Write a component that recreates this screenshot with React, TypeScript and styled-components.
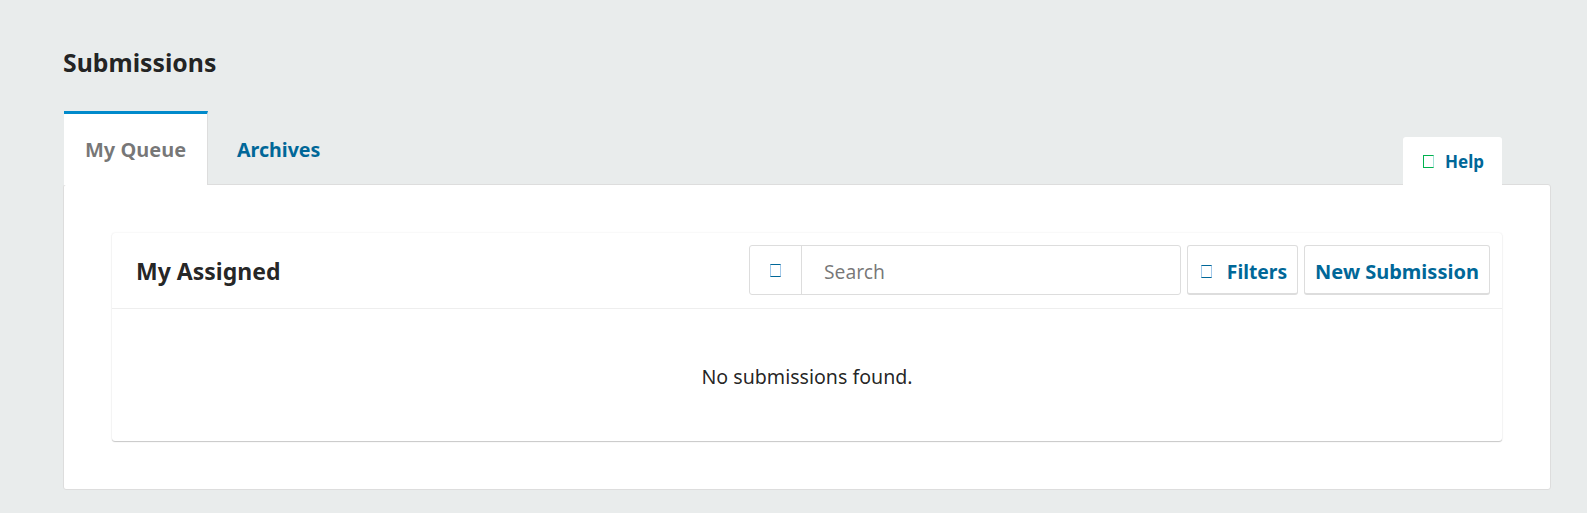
import React, { ReactElement } from "react";
import styled, { createGlobalStyle } from "styled-components";

const linkColor = "#006798";
const textColor = "rgba(0, 0, 0, 0.87)";
const lineColor = "#ddd";
const paleBlue = "#a3c9ea";

const GlobalStyle = createGlobalStyle`
    html, body {
        margin: 0;
        padding: 0;
        background: #e9ecec;
    }
    body {
        font-family: "Noto Sans", "Open Sans", sans-serif;
        color: ${textColor};
    }
`;

const Page = styled.div`
    height: 513px;
    box-sizing: border-box;
    padding: 46px 36px 0 63px;
    overflow: hidden;
`;

const Title = styled.h1`
    margin: 0;
    height: 32px;
    line-height: 32px;
    font-size: 24.8px;
    font-weight: 700;
`;

const TabRow = styled.div`
    display: flex;
    align-items: flex-end;
    height: 74px;
    margin-top: 32px;
    padding-left: 1px;
`;

const ActiveTab = styled.div`
    width: 144px;
    height: 74px;
    box-sizing: border-box;
    border-top: 3px solid #008acb;
    border-right: 1px solid ${lineColor};
    background: #fff;
    color: rgba(0, 0, 0, 0.54);
    font-size: 20px;
    font-weight: 700;
    line-height: 71px;
    text-align: center;
    margin-bottom: -1px;
    position: relative;
    z-index: 1;
`;

const Tab = styled.div`
    height: 74px;
    padding: 0 29px;
    color: ${linkColor};
    font-size: 19.6px;
    font-weight: 700;
    line-height: 80px;
`;

const HelpTab = styled.div`
    display: flex;
    align-items: center;
    gap: 11px;
    width: 99px;
    height: 48px;
    box-sizing: border-box;
    margin-left: auto;
    margin-right: 49px;
    margin-bottom: -1px;
    padding-left: 20px;
    border-radius: 3px 3px 0 0;
    background: #fff;
    color: ${linkColor};
    font-size: 17px;
    font-weight: 700;
    position: relative;
    z-index: 1;
`;

const MissingGlyph = styled.span<{ $color: string; $left: string; $right: string }>`
    display: block;
    flex: none;
    width: 11px;
    height: 13px;
    box-sizing: border-box;
    border: 1px solid ${props => props.$color};
    border-left-color: ${props => props.$left};
    border-right-color: ${props => props.$right};
`;

const Panel = styled.div`
    height: 306px;
    box-sizing: border-box;
    padding: 48px 48px 0 48px;
    border: 1px solid ${lineColor};
    border-radius: 3px;
    background: #fff;
`;

const Card = styled.div`
    height: 208px;
    border-radius: 3px;
    background: #fff;
    box-shadow: 0 1px 1px rgba(0, 0, 0, 0.2), 0 0 2px rgba(0, 0, 0, 0.1);
`;

const CardHeader = styled.div`
    display: flex;
    align-items: center;
    gap: 6px;
    height: 76px;
    box-sizing: border-box;
    padding: 0 12px 2px 24px;
    border-bottom: 1px solid #eee;
`;

const CardTitle = styled.h2`
    margin: 2px auto 0 0;
    font-size: 23px;
    font-weight: 700;
`;

const SearchBox = styled.div`
    display: flex;
    width: 432px;
    height: 50px;
    box-sizing: border-box;
    border: 1px solid ${lineColor};
    border-radius: 3px;
`;

const SearchIcon = styled.div`
    display: flex;
    align-items: center;
    justify-content: center;
    width: 51px;
    padding-top: 1px;
    border-right: 1px solid ${lineColor};
`;

const SearchPlaceholder = styled.div`
    padding-left: 22px;
    color: rgba(0, 0, 0, 0.54);
    font-size: 19.3px;
    line-height: 52px;
`;

const Button = styled.div<{ $width: number; $size: number; $inset?: number }>`
    display: flex;
    align-items: center;
    justify-content: center;
    gap: 15px;
    width: ${props => props.$width}px;
    height: 50px;
    box-sizing: border-box;
    padding: 5px 0 0 ${props => props.$inset || 0}px;
    border: 1px solid ${lineColor};
    border-bottom: 2px solid ${lineColor};
    border-radius: 3px;
    background: #fff;
    color: ${linkColor};
    font-size: ${props => props.$size}px;
    font-weight: 700;
`;

const EmptyMessage = styled.div`
    padding-top: 54px;
    font-size: 19.6px;
    line-height: 28px;
    text-align: center;
`;

const App = (): ReactElement => (
    <>
        <GlobalStyle />
        <Page>
            <Title>Submissions</Title>
            <TabRow>
                <ActiveTab>My Queue</ActiveTab>
                <Tab>Archives</Tab>
                <HelpTab>
                    <MissingGlyph $color="#00b24e" $left="#00b24e" $right="#a5e3d8" />
                    Help
                </HelpTab>
            </TabRow>
            <Panel>
                <Card>
                    <CardHeader>
                        <CardTitle>My Assigned</CardTitle>
                        <SearchBox>
                            <SearchIcon>
                                <MissingGlyph $color={linkColor} $left={paleBlue} $right={paleBlue} />
                            </SearchIcon>
                            <SearchPlaceholder>Search</SearchPlaceholder>
                        </SearchBox>
                        <Button $width={111} $size={19.3} $inset={3}>
                            <MissingGlyph $color={linkColor} $left={paleBlue} $right={paleBlue} />
                            Filters
                        </Button>
                        <Button $width={186} $size={20}>New Submission</Button>
                    </CardHeader>
                    <EmptyMessage>No submissions found.</EmptyMessage>
                </Card>
            </Panel>
        </Page>
    </>
);

export default App;
